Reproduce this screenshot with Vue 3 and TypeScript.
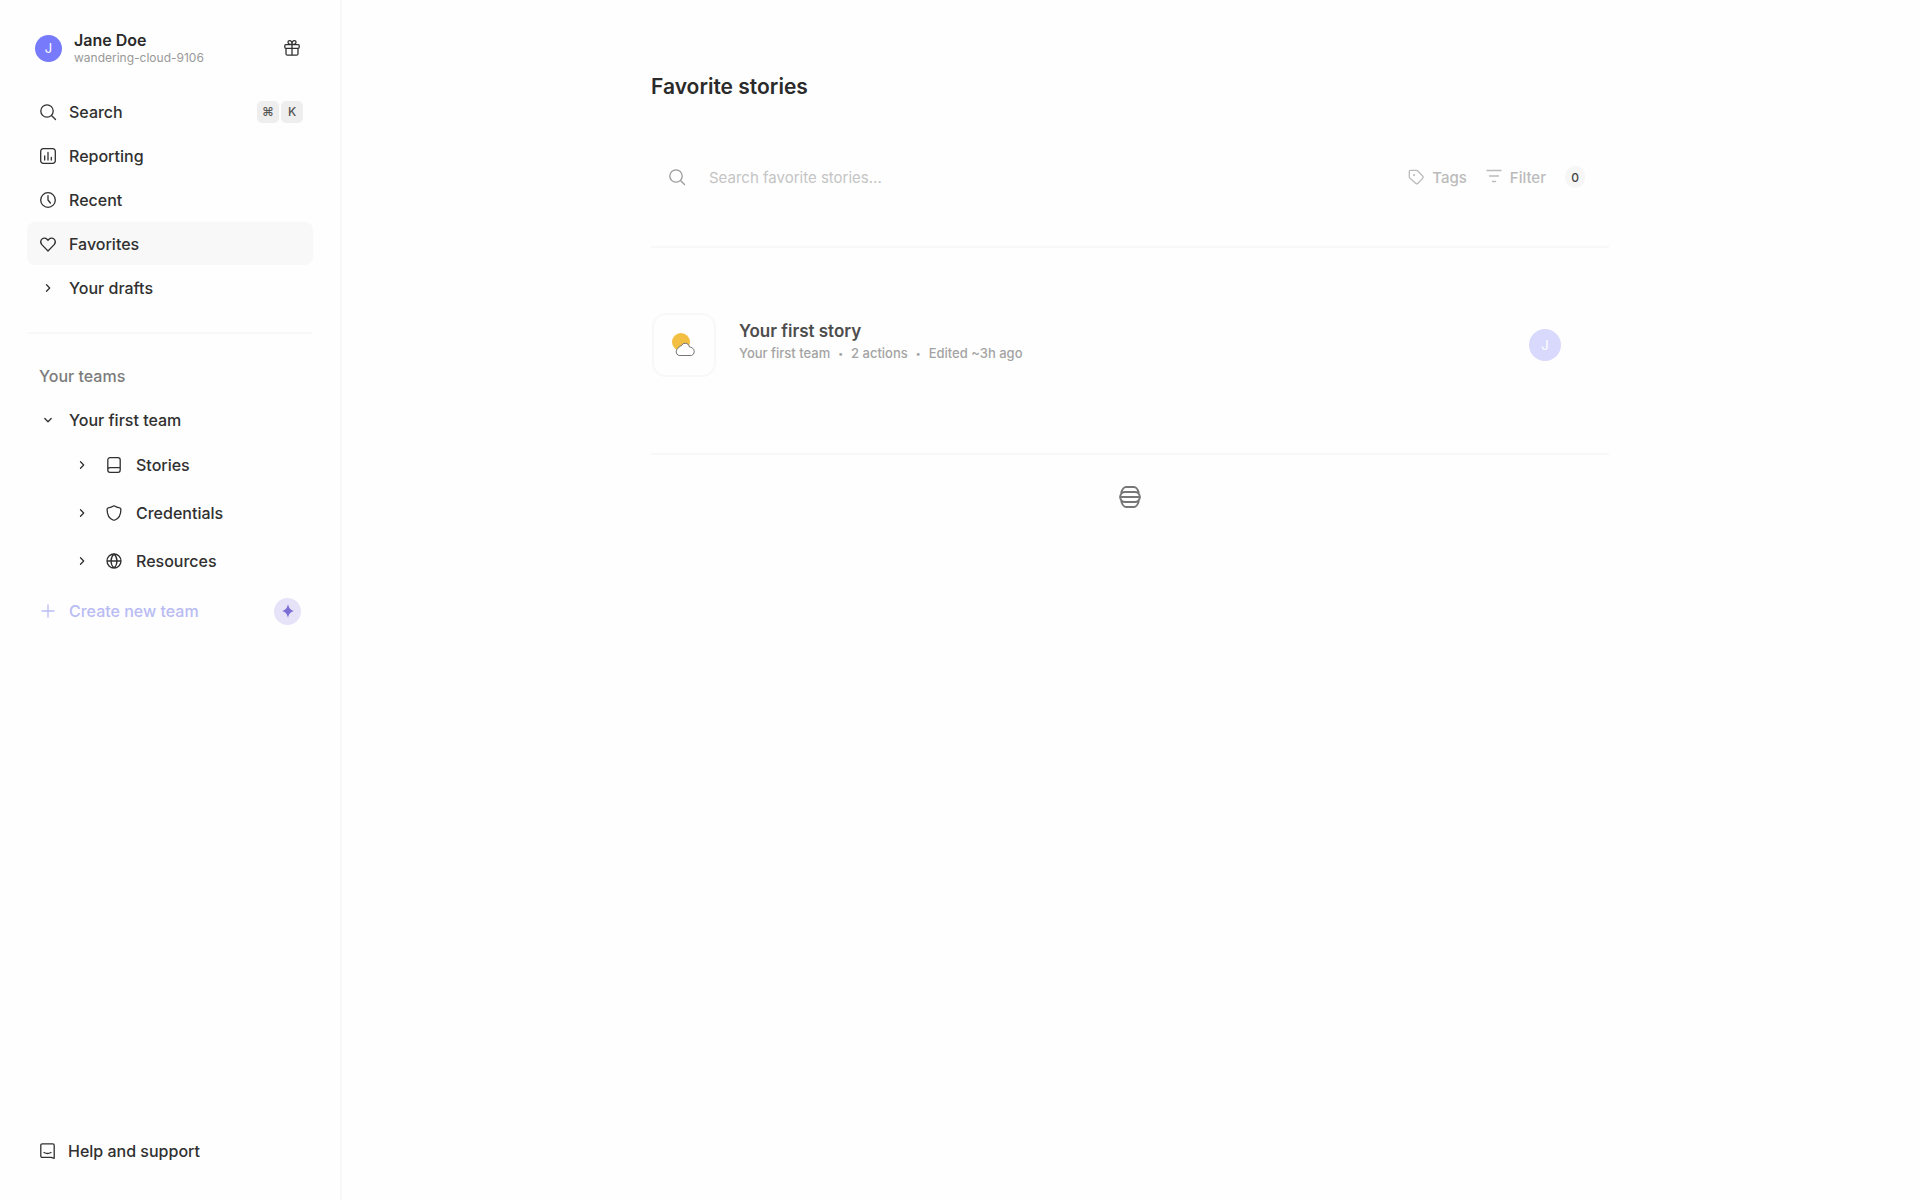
<script setup lang="ts">
import { ref } from 'vue'

type IconName = 'search' | 'chart' | 'clock' | 'heart' | 'chevron' | 'book' | 'shield' | 'globe'

interface NavItem {
  label: string
  icon: IconName
  active?: boolean
  keys?: string[]
}

const icons: Record<IconName, string> = {
  search: 'M7 .8a6.2 6.2 0 1 0 0 12.4A6.2 6.2 0 0 0 7 .8M11.5 11.5l4 4',
  chart: 'M3.2 .7h9.6a2.5 2.5 0 0 1 2.5 2.5v9.6a2.5 2.5 0 0 1-2.5 2.5H3.2a2.5 2.5 0 0 1-2.5-2.5V3.2A2.5 2.5 0 0 1 3.2 .7M4.7 8v4M8 4.5V12M11.3 9.5V12',
  clock: 'M8 .7a7.3 7.3 0 1 0 0 14.6A7.3 7.3 0 0 0 8 .7M8 3.7V8l2.4 3',
  heart: 'M8 15 1.8 8.6a4 4 0 0 1-.6-4.6A3.7 3.7 0 0 1 7 3.2l1 1 1-1a3.7 3.7 0 0 1 5.8 .8 4 4 0 0 1-.6 4.6z',
  chevron: 'M6.5 4.8 9.7 8l-3.2 3.2',
  book: 'M4 .7h8a2.2 2.2 0 0 1 2.2 2.2v10.2a2.2 2.2 0 0 1-2.2 2.2H4a2.2 2.2 0 0 1-2.2-2.2V2.9A2.2 2.2 0 0 1 4 .7M1.8 12.8A2.2 2.2 0 0 1 4 10.6h10.2',
  shield: 'M8 .8c2 1.3 3.8 1.9 5.7 2.1q1.2 .2 1.2 1.4C14.9 9.5 13 13.5 9 15q-1 .4-2 0C3 13.5 1.1 9.5 1.1 4.3q0-1.2 1.2-1.4C4.2 2.7 6 2.1 8 .8z',
  globe: 'M8 1a7 7 0 1 0 0 14A7 7 0 0 0 8 1M1 8h14M8 1c-4 3.8-4 10.2 0 14M8 1c4 3.8 4 10.2 0 14',
}

const navItems: NavItem[] = [
  { label: 'Search', icon: 'search', keys: ['⌘', 'K'] },
  { label: 'Reporting', icon: 'chart' },
  { label: 'Recent', icon: 'clock' },
  { label: 'Favorites', icon: 'heart', active: true },
  { label: 'Your drafts', icon: 'chevron' },
]

const teamItems: NavItem[] = [
  { label: 'Stories', icon: 'book' },
  { label: 'Credentials', icon: 'shield' },
  { label: 'Resources', icon: 'globe' },
]

const query = ref('')
</script>

<template>
  <div class="layout">
    <aside class="sidebar">
      <header class="account">
        <span class="avatar">J</span>
        <div class="account-text">
          <strong>Jane Doe</strong>
          <span>wandering-cloud-9106</span>
        </div>
        <button class="gift" type="button" aria-label="What's new">
          <svg class="icon" viewBox="0 0 16 16">
            <path d="M1.8 4.7h12.4q1 0 1 1v1.6q0 1-1 1H1.8q-1 0-1-1V5.7q0-1 1-1M2 8.3v5.4q0 1.5 1.5 1.5h9q1.5 0 1.5-1.5V8.3M8 4.7v10.5M8 4.5C6.8 4.5 4 4.2 4 2.3 4 1.2 4.8 .6 5.7 .6 7.3 .6 8 2.5 8 4.5zM8 4.5c1.2 0 4-.3 4-2.2 0-1.1-.8-1.7-1.7-1.7C8.7 .6 8 2.5 8 4.5z" />
          </svg>
        </button>
      </header>

      <nav class="nav" aria-label="Main">
        <a v-for="item in navItems" :key="item.label" href="#" class="row" :class="{ active: item.active }">
          <svg class="icon" viewBox="0 0 16 16"><path :d="icons[item.icon]" /></svg>
          <span class="label">{{ item.label }}</span>
          <span v-if="item.keys" class="keys">
            <kbd v-for="key in item.keys" :key="key">{{ key }}</kbd>
          </span>
        </a>
      </nav>

      <hr class="side-rule" />

      <section class="teams">
        <h2>Your teams</h2>
        <button class="row" type="button" aria-expanded="true">
          <svg class="icon" viewBox="0 0 16 16"><path d="M4.8 6.5 8 9.7l3.2-3.2" /></svg>
          <span class="label">Your first team</span>
        </button>
        <a v-for="item in teamItems" :key="item.label" href="#" class="row sub">
          <svg class="icon" viewBox="0 0 16 16"><path :d="icons.chevron" /></svg>
          <svg class="icon kind" viewBox="0 0 16 16"><path :d="icons[item.icon]" /></svg>
          <span class="label">{{ item.label }}</span>
        </a>
        <button class="row create" type="button">
          <svg class="icon" viewBox="0 0 16 16"><path d="M8 2v12M2 8h12" /></svg>
          <span class="label">Create new team</span>
          <span class="spark">
            <svg viewBox="0 0 12 12"><path d="M6 0C6.7 3.4 7.9 5.1 11 6 7.9 6.9 6.7 8.6 6 12 5.3 8.6 4.1 6.9 1 6 4.1 5.1 5.3 3.4 6 0z" /></svg>
          </span>
        </button>
      </section>

      <a href="#" class="row help">
        <svg class="icon" viewBox="0 0 16 16"><path d="M2.3 .8h10.4q1.5 0 1.5 1.5v13l-3-1H2.3q-1.5 0-1.5-1.5V2.3q0-1.5 1.5-1.5M4 9.5q3.5 2 7 0" /></svg>
        <span class="label">Help and support</span>
      </a>
    </aside>

    <main class="main">
      <div class="content">
        <h1>Favorite stories</h1>

        <form class="toolbar" role="search" @submit.prevent>
          <label class="search">
            <svg class="icon" viewBox="0 0 16 16"><path :d="icons.search" /></svg>
            <input v-model="query" type="text" placeholder="Search favorite stories..." aria-label="Search favorite stories" />
          </label>
          <button class="tool" type="button">
            <svg class="icon" viewBox="0 0 16 16">
              <path d="M2.3 1.3h6q.8 0 1.3 .5l5 5.2q1.2 1.2 0 2.4l-4.6 4.8q-1.2 1.2-2.4 0L1.8 9q-.5-.5-.5-1.2V2.3q0-1 1-1" />
              <circle class="dot" cx="6" cy="6" r="1.1" />
            </svg>
            Tags
          </button>
          <button class="tool" type="button">
            <svg class="icon" viewBox="0 0 16 16"><path d="M1 1.5h14M3.5 7h9M6.5 12.5h3" /></svg>
            Filter
          </button>
          <span class="count">0</span>
        </form>

        <article class="story">
          <div class="tile">
            <svg viewBox="0 0 24 24">
              <circle cx="9" cy="9" r="9" fill="#f3bf42" />
              <path d="M7 22.5a4 4 0 0 1-.5-7.5 2.8 2.8 0 0 1 2.8-2.2 4.3 4.3 0 0 1 8.2 1.2 4 4 0 0 1 2.5 .8 4.2 4.2 0 0 1-.5 7.7z" fill="#fff" stroke="#777" stroke-width="1" />
            </svg>
          </div>
          <div class="story-text">
            <a href="#">Your first story</a>
            <ul>
              <li>Your first team</li>
              <li>2 actions</li>
              <li>Edited ~3h ago</li>
            </ul>
          </div>
          <span class="avatar owner">J</span>
        </article>

        <div class="loader" role="status" aria-label="Loading">
          <svg viewBox="0 0 22 22">
            <path d="M7 1h8c3 0 4 3 5 6M7 1C4 1 3 4 2 7M6 6h10c3 0 4.500 2 5 5-.5 3-2 5-5 5H6c-3 0-4.500-2-5-5 .5-3 2-5 5-5M1 11h20M2 15c1 3 2 6 5 6h8c3 0 4-3 5-6" />
          </svg>
        </div>
      </div>
    </main>
  </div>
</template>

<style>
body {
  margin: 0;
  background: #fefefe;
}
</style>

<style scoped>
.layout {
  display: flex;
  min-height: 100vh;
  font-family: Inter, "Liberation Sans", sans-serif;
  color: #303030;
  background: #fefefe;
}

button {
  border: 0;
  background: none;
  font: inherit;
  color: inherit;
  padding: 0;
  text-align: left;
}

a {
  color: inherit;
  text-decoration: none;
}

.icon {
  flex: none;
  width: 16px;
  height: 16px;
  fill: none;
  stroke: currentColor;
  stroke-width: 1.3;
  stroke-linecap: round;
  stroke-linejoin: round;
  overflow: visible;
}

.sidebar {
  flex: none;
  display: flex;
  flex-direction: column;
  box-sizing: border-box;
  width: 342px;
  padding: 24px 27px 28px;
  border-right: 2px solid #f8f8f8;
}

.account {
  display: flex;
  align-items: center;
  gap: 12px;
  height: 48px;
  padding: 0 13px 0 8px;
}

.avatar {
  flex: none;
  display: grid;
  place-items: center;
  width: 27px;
  height: 27px;
  border-radius: 50%;
  background: #777bfb;
  color: #fff;
  font-size: 13px;
}

.account-text {
  display: flex;
  flex: 1;
  flex-direction: column;
  padding-top: 2px;
  line-height: 18px;
  font-size: 12px;
  color: #999;
}

.account-text strong {
  font-size: 16px;
  font-weight: 600;
  color: #2a2a2a;
}

.gift {
  display: flex;
}

.nav {
  display: flex;
  flex-direction: column;
  gap: 1px;
  margin-top: 18px;
}

.row {
  display: flex;
  align-items: center;
  gap: 13px;
  box-sizing: border-box;
  width: 100%;
  height: 43px;
  padding: 0 10px 0 13px;
  border-radius: 8px;
  font-size: 16px;
  font-weight: 500;
}

.row.active {
  background: #f8f8f8;
}

.label {
  flex: 1;
}

.keys {
  display: flex;
  gap: 2px;
}

kbd {
  display: grid;
  place-items: center;
  width: 22px;
  height: 22px;
  border-radius: 5px;
  background: #eee;
  color: #555;
  font-family: inherit;
  font-size: 12px;
}

.side-rule {
  width: 284px;
  height: 2px;
  margin: 23px auto 20px 1px;
  border: 0;
  background: #f8f8f8;
}

.teams h2 {
  margin: 0;
  padding-left: 12px;
  line-height: 44px;
  font-size: 16px;
  font-weight: 500;
  color: #7b7b7b;
}

.row.sub {
  height: 48px;
  gap: 14px;
  padding-left: 47px;
}

.kind {
  margin-left: 2px;
}

.row.create {
  height: 52px;
  padding-right: 12px;
  color: #b9bbf3;
}

.spark {
  display: grid;
  place-items: center;
  width: 27px;
  height: 27px;
  border-radius: 50%;
  background: #e6e3f8;
}

.spark svg {
  width: 14px;
  height: 14px;
  fill: #7b6fd6;
}

.help {
  gap: 12px;
  margin-top: auto;
}

.main {
  flex: 1;
  min-width: 0;
  padding: 0 34px 0 32px;
}

.content {
  max-width: 958px;
  margin: 0 auto;
  padding-top: 66px;
}

h1 {
  margin: 0;
  line-height: 42px;
  font-size: 21px;
  font-weight: 600;
  color: #2a2a2a;
}

.toolbar {
  display: flex;
  align-items: center;
  gap: 19px;
  height: 138px;
  padding: 0 24px 0 18px;
  border-bottom: 2px solid #f8f8f8;
  color: #bbb;
}

.search {
  display: flex;
  flex: 1;
  align-items: center;
  gap: 24px;
  color: #999;
}

.search input {
  flex: 1;
  min-width: 0;
  padding: 0;
  border: 0;
  outline: 0;
  background: none;
  font: inherit;
  font-size: 15px;
  color: #303030;
}

.search input::placeholder {
  color: #c4c4c4;
}

.tool {
  display: flex;
  align-items: center;
  gap: 8px;
  font-size: 15px;
  font-weight: 500;
}

.count {
  display: grid;
  place-items: center;
  width: 20px;
  height: 22px;
  border-radius: 10px;
  background: #f6f6f6;
  color: #444;
  font-size: 12px;
  font-weight: 500;
}

.dot {
  fill: currentColor;
  stroke: none;
}

.story {
  display: flex;
  align-items: center;
  gap: 23px;
  height: 193px;
  padding: 0 48px 12px 1px;
  border-bottom: 2px solid #f8f8f8;
}

.tile {
  display: grid;
  place-items: center;
  width: 60px;
  height: 60px;
  border: 2px solid #f8f8f8;
  border-radius: 14px;
}

.tile svg {
  width: 24px;
  height: 24px;
}

.story-text {
  flex: 1;
  padding-bottom: 6px;
}

.story-text a {
  display: block;
  line-height: 24px;
  font-size: 17px;
  font-weight: 600;
  color: #4d4d4d;
}

.story-text ul {
  display: flex;
  margin: 0;
  padding: 0;
  list-style: none;
  line-height: 20px;
  font-size: 13px;
  font-weight: 500;
  color: #a3a3a3;
}

.story-text li + li::before {
  content: "•";
  margin: 0 8px;
  font-size: 9px;
  vertical-align: 1px;
}

.owner {
  width: 32px;
  height: 32px;
  background: #d8d9fc;
}

.loader {
  display: flex;
  justify-content: center;
  padding-top: 31px;
}

.loader svg {
  width: 22px;
  height: 22px;
  fill: none;
  stroke: #777;
  stroke-width: 1.8;
}
</style>
